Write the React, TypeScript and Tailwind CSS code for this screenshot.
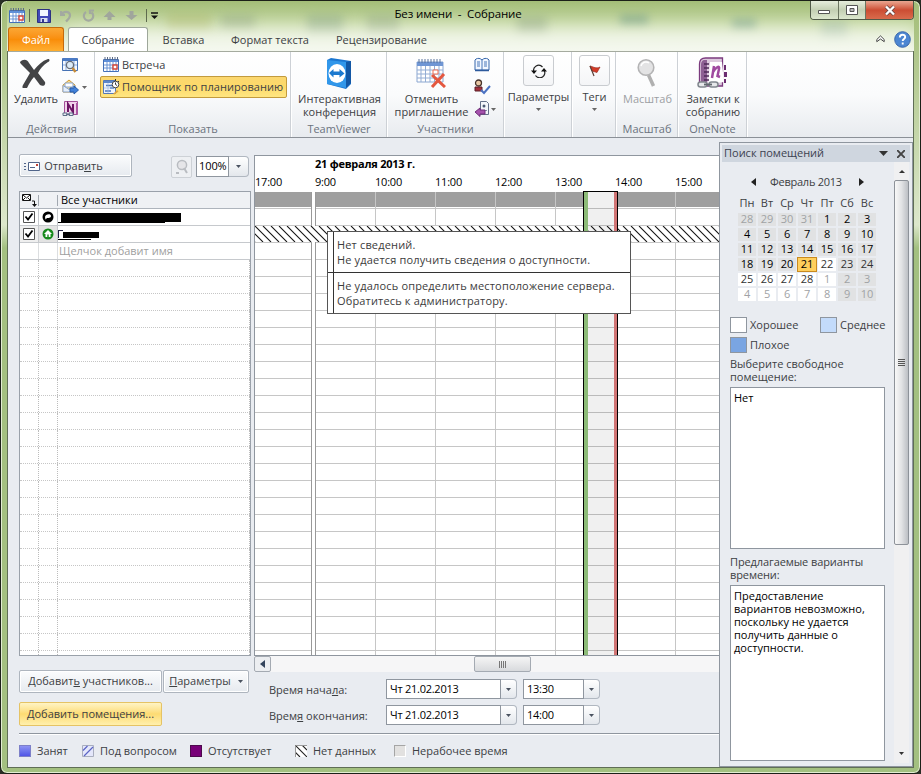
import type { ReactNode } from "react";

const hours = ["10:00", "11:00", "12:00", "13:00", "14:00", "15:00"];

const weekDays = ["Пн", "Вт", "Ср", "Чт", "Пт", "Сб", "Вс"];

const weeks = [
  [28, 29, 30, 31, 1, 2, 3],
  [4, 5, 6, 7, 8, 9, 10],
  [11, 12, 13, 14, 15, 16, 17],
  [18, 19, 20, 21, 22, 23, 24],
  [25, 26, 27, 28, 1, 2, 3],
  [4, 5, 6, 7, 8, 9, 10],
];

const dayClass = (week: number, day: number) => {
  if (week === 3 && day === 3)
    return "bg-[#ffcf5c] text-black outline outline-[#c98a1e]";
  const background =
    (week === 3 && day === 4) || (week > 3 && day < 5)
      ? "bg-white"
      : "bg-[#e1e2e3]";
  if ((week === 0 && day < 4) || (week === 4 && day > 3) || week === 5)
    return `${background} text-[#a0a2a5]`;
  if (week === 4 || (week === 3 && day > 3))
    return `${background} text-[#333]`;
  return `${background} text-black`;
};

const Arrow = ({ className = "text-[#4a5260]" }: { className?: string }) => (
  <svg className={className} width="5" height="3" viewBox="0 0 5 3">
    <path d="M0 0h5L2.5 3z" fill="currentColor" />
  </svg>
);

const CalendarIcon = () => (
  <svg width="17" height="16" viewBox="0 0 17 16">
    <path d="M.5 2.500h15v12h-15z" fill="#fff" stroke="#4470b8" />
    <path d="M1 3h14v2H1z" fill="#5f8fd8" />
    <path d="M2 0v3M4.500 0v3M7 0v3M9.500 0v3M12 0v3M14.500 0v3" stroke="#5b6b86" />
    <path
      d="M1 8h14M1 11h14M4 5v9M7 5v9M10 5v9M13 5v9"
      stroke="#5d8ad0"
      strokeWidth=".9"
    />
    <path d="M10 8h4v4h-4z" fill="#fff" stroke="#d8483a" strokeWidth="1.400" />
  </svg>
);

const AssistantIcon = () => (
  <svg width="17" height="16" viewBox="0 0 17 16">
    <path d="M.5 1.500h12v13H.5z" fill="#eef4fd" stroke="#5579b5" />
    <path d="M1 2h11v2H1z" fill="#5b87cc" />
    <path d="M3 6.500h6M7 9h4M2 12h6" stroke="#4874bd" strokeWidth="1.600" />
    <path d="M1 9h11M5 4v10" stroke="#9fb9e0" strokeWidth=".7" />
    <circle cx="12.500" cy="5.500" r="3.300" fill="#fff" stroke="#444" />
    <path d="M12.500 5.500V3.500M12.500 5.500l1.500 1M12.500 0v2M15 2l1 1" stroke="#333" />
    <path d="M10 15l4-4 1.500 1.500-4 3z" fill="#e2a83c" />
  </svg>
);

const Group = ({
  label,
  className,
  children,
}: {
  label?: string;
  className: string;
  children: ReactNode;
}) => (
  <div
    className={`flex shrink-0 flex-col border-r border-[#cdd1d6] shadow-[1px_0_0_#fff] ${className}`}
  >
    <div className="flex h-[70px]">{children}</div>
    <div className="h-[15px] pl-px text-center text-[#6b737e]">{label}</div>
  </div>
);

const BigButton = ({
  icon,
  lines,
  className = "",
}: {
  icon: ReactNode;
  lines: string[];
  className?: string;
}) => (
  <div className={`flex flex-col items-center pt-[5px] ${className}`}>
    <div className="flex h-8 items-center justify-center">{icon}</div>
    <div className="pt-[3px] pl-[2px] text-center leading-[13px] whitespace-nowrap">
      {lines.map((line) => (
        <div key={line}>{line}</div>
      ))}
    </div>
  </div>
);

const Field = ({ value, className }: { value: string; className: string }) => (
  <div className={`flex h-[20px] ${className}`}>
    <div className="flex-1 border border-[#8f969f] bg-white pl-[3px] leading-[17px] tracking-[-0.250px] text-black">
      {value}
    </div>
    <div className="flex w-4 items-center justify-center rounded-r-sm border border-l-0 border-[#b0b7c0] bg-linear-to-b from-white to-[#e3e7ec]">
      <Arrow />
    </div>
  </div>
);

const button =
  "flex h-[23px] items-center justify-center rounded-[2px] border border-[#aeb5be] bg-linear-to-b from-[#fbfcfd] to-[#e6eaef] shadow-[inset_0_0_0_1px_#fff]";

const QuickAccess = () => (
  <div className="flex h-[26px] items-center pt-[3px] pl-[2px]">
    <CalendarIcon />
    <div className="ml-[3px] h-[13px] w-px bg-[#5e6b4e]" />
    <svg className="ml-[7px]" width="14" height="14" viewBox="0 0 14 14">
      <path d="M.5.5h12l1 1v12H.5z" fill="#4148b8" stroke="#2c3180" />
      <path d="M3 1h8v6H3z" fill="#f2f6ff" />
      <path d="M3.500 9h7v4h-7z" fill="#d8def0" />
      <path d="M5 10h2v3H5z" fill="#343a90" />
    </svg>
    <svg className="ml-[9px]" width="12" height="14" viewBox="0 0 12 14">
      <path
        d="M1 2v4h4M1.500 5.500C4 1.500 10 2 10 6.500 10 9 8 10.500 6 12.500"
        fill="none"
        stroke="#a3a9a0"
        strokeWidth="2.200"
      />
    </svg>
    <svg className="ml-[10px]" width="13" height="14" viewBox="0 0 13 14">
      <path
        d="M4 3a4.700 4.700 0 1 0 5.500.3M8 5V1.500h4"
        fill="none"
        stroke="#a3a9a0"
        strokeWidth="2.200"
      />
    </svg>
    <svg className="ml-[8px]" width="13" height="10" viewBox="0 0 12 10">
      <path d="M6 0l6 6H8v3H4V6H0z" fill="#a0a69c" />
    </svg>
    <svg className="ml-[9px]" width="13" height="10" viewBox="0 0 12 10">
      <path d="M6 9L0 4h4V0h4v4h4z" fill="#a0a69c" />
    </svg>
    <div className="ml-[8px] h-[13px] w-px bg-[#5e6b4e]" />
    <svg className="ml-[4px]" width="7" height="8" viewBox="0 0 7 8">
      <path d="M0 1h7" stroke="#111" strokeWidth="1.500" />
      <path d="M0 3.500h7L3.500 7z" fill="#111" />
    </svg>
  </div>
);

const WindowButtons = () => (
  <div className="absolute top-0 right-0 flex h-[19px] w-[104px] overflow-hidden rounded-b-[4px] border border-t-0 border-[#505a48]">
    <div className="flex w-[28px] items-center justify-center border-r border-[#6b7560] bg-linear-to-b from-[#e6eddc] via-[#c3cfb3] to-[#dce7ce]">
      <svg width="13" height="12" viewBox="0 0 13 12">
        <path d="M.5 6.500h11v3H.5z" fill="#fff" stroke="#555" />
      </svg>
    </div>
    <div className="flex w-[27px] items-center justify-center border-r border-[#6b7560] bg-linear-to-b from-[#e6eddc] via-[#c3cfb3] to-[#dce7ce]">
      <svg width="12" height="10" viewBox="0 0 12 10">
        <path d="M.5.5h11v9H.5z" fill="#fff" stroke="#555" />
        <path d="M4 3.500h4v3H4z" fill="#bbb" stroke="#555" />
      </svg>
    </div>
    <div className="flex flex-1 items-center justify-center bg-linear-to-b from-[#e8a691] via-[#cc4d33] to-[#d96b4c]">
      <svg width="12" height="11" viewBox="0 0 12 11">
        <path d="M2 1.500l8 8M10 1.500l-8 8" stroke="#5a4040" strokeWidth="3.800" />
        <path d="M2 1.500l8 8M10 1.500l-8 8" stroke="#fff" strokeWidth="2.400" />
      </svg>
    </div>
  </div>
);

const TitleBar = () => (
  <header className="relative h-[50px] overflow-hidden bg-linear-to-b from-[#a3bd77] via-[#c9dba9] to-[#edf3e3]">
    <div className="absolute top-[12px] left-[160px] h-[18px] w-[44px] bg-[#aeb96b]/50 blur-[5px]" />
    <div className="absolute top-[14px] left-[214px] h-[14px] w-[34px] bg-[#8fa67d]/50 blur-[5px]" />
    <div className="absolute top-[14px] left-[300px] h-[18px] w-[36px] bg-[#86a280]/50 blur-[5px]" />
    <div className="absolute top-[14px] left-[360px] h-[18px] w-[32px] bg-[#8fa67d]/50 blur-[5px]" />
    <div className="absolute top-[16px] left-[510px] h-[16px] w-[30px] bg-[#8fa67d]/60 blur-[5px]" />
    <div className="absolute top-[14px] left-[613px] h-[10px] w-[28px] bg-[#6f9a80]/60 blur-[4px]" />
    <div className="absolute top-[18px] left-[725px] h-[10px] w-[24px] bg-[#6f9a80]/60 blur-[4px]" />
    <div className="absolute top-[20px] left-[814px] h-[16px] w-[26px] bg-[#8fae95]/50 blur-[5px]" />
    <div className="absolute top-[26px] right-0 left-[60px] h-[30px] bg-white/55 blur-[8px]" />
    <div className="absolute top-[5px] right-0 left-0 pr-[5px] text-center text-[11.500px] leading-[15px] tracking-[-0.130px] whitespace-pre text-black">
      <span>Без имени  -  Собрание</span>
    </div>
    <WindowButtons />
    <div className="relative">
      <QuickAccess />
      <nav className="flex h-[24px] pl-px leading-[26px] text-[#3c4043]">
        <div className="w-[56px] rounded-t-[3px] border border-b-0 border-[#c56a0c] bg-linear-to-b from-[#fba733] via-[#f98d08] to-[#ffae2e] text-center leading-[24px] text-white">
          Файл
        </div>
        <div className="ml-1 w-[80px] rounded-t-[3px] border border-b-0 border-[#9ea79a] bg-white text-center leading-[24px]">
          Собрание
        </div>
        <div className="w-[71px] text-center">Вставка</div>
        <div className="w-[102px] text-center">Формат текста</div>
        <div className="w-[121px] text-center">Рецензирование</div>
        <div className="ml-auto flex items-center gap-[9px] pr-[3px]">
          <svg width="9" height="8" viewBox="0 0 9 8">
            <path
              d="M.8 4.500L4.500.9l3.700 3.600v2.200L4.500 4 .8 6.700z"
              fill="#fff"
              stroke="#444"
            />
          </svg>
          <svg width="17" height="17" viewBox="0 0 17 17">
            <circle cx="8.500" cy="8.500" r="7.800" fill="#4c86d2" stroke="#3a67aa" />
            <path
              d="M5.800 6.500c0-3.800 5.600-3.500 5.400-.4C11.100 8 8.700 8 8.700 10M8.700 11.500v2"
              fill="none"
              stroke="#fff"
              strokeWidth="1.900"
            />
          </svg>
        </div>
      </nav>
    </div>
  </header>
);

const Ribbon = () => (
  <section className="flex h-[87px] border-t border-b border-[#8b9097] border-t-[#a5ab9f] bg-linear-to-b from-white via-[#fafbfc] to-[#e8ebef] leading-[14px]">
    <Group label="Действия" className="w-[87px]">
      <BigButton
        className="w-[54px]"
        lines={["Удалить"]}
        icon={
          <svg width="30" height="29" viewBox="0 0 30 29">
            <path
              d="M0 3c3-3 7-3 9 1l5 7c4-5 8-9 14-11 2 0 2 2 0 3-5 3-8 7-10 11l7 9c1 3-2 5-5 3l-6-8c-3 3-5 7-7 11-2 2-6 1-4-3l7-12-8-8C1 5 0 4 0 3z"
              fill="#434446"
            />
          </svg>
        }
      />
      <div className="flex flex-col gap-[6px] pt-[5px]">
        <svg width="17" height="16" viewBox="0 0 17 16">
          <path d="M.5 1.500h15v12h-15z" fill="#f4f8fe" stroke="#4672b4" />
          <path d="M1 1h14v3H1z" fill="#4a7ac4" />
          <path d="M4 4v9M12 4v9M1 8h14" stroke="#8badde" />
          <circle cx="8" cy="8" r="3.600" fill="#dcebf8" stroke="#666d78" strokeWidth="1.300" />
          <path d="M10.500 11l3 4" stroke="#c68b38" strokeWidth="2.500" />
        </svg>
        <div className="flex items-center gap-[3px]">
          <svg width="17" height="16" viewBox="0 0 17 16">
            <path d="M1 6l6-5 6 5v7H1z" fill="#f9dc8e" stroke="#d39d36" />
            <path d="M3 4h8v4H3z" fill="#fff" stroke="#89a5ce" />
            <path d="M1 6.500l6 4 6-4V13H1z" fill="#e6effa" stroke="#8ba5cc" />
            <path d="M8 9h4V7l4.500 4-4.500 4v-2H8z" fill="#4180d8" stroke="#265ba8" />
          </svg>
          <Arrow className="text-[#666]" />
        </div>
        <svg width="17" height="16" viewBox="0 0 17 16">
          <path d="M2.500.5h13v13h-13z" fill="#f0d3ea" stroke="#a34f98" />
          <path d="M6 11V3l5 8V3" fill="none" stroke="#6d1565" strokeWidth="2" />
          <path d="M14 2h2v11h-2z" fill="#ad57a2" />
          <path
            d="M1 12h4v2.500H1zM7 12h4v2.500H7zM4 13.300h4"
            fill="#e9eef3"
            stroke="#5d6f88"
          />
        </svg>
      </div>
    </Group>
    <Group label="Показать" className="w-[196px]">
      <div className="pt-[3px] pl-[5px]">
        <div className="flex h-[19px] items-center gap-[2px] pl-[3px]">
          <CalendarIcon />
          <span>Встреча</span>
        </div>
        <div className="mt-[2px] flex h-[22px] w-[187px] items-center gap-[2px] rounded-[2px] border border-[#c29b3d] bg-linear-to-b from-[#fbd76f] via-[#fdda69] to-[#ffe682] pl-[2px] whitespace-nowrap">
          <AssistantIcon />
          <span className="tracking-[0.050px]">Помощник по планированию</span>
        </div>
      </div>
    </Group>
    <Group label="TeamViewer" className="w-[96px]">
      <BigButton
        className="w-full"
        lines={["Интерактивная", "конференция"]}
        icon={
          <svg width="26" height="31" viewBox="0 0 26 31">
            <path d="M1 2l4-2 20 3v23l-5 5-19-5z" fill="#1b76d0" />
            <path d="M1 2l19 2v26L1 26z" fill="#3197ea" />
            <path d="M20 4l5-1v22l-5 5z" fill="#1257a5" />
            <ellipse cx="11" cy="15.500" rx="8.500" ry="9.500" fill="#fff" />
            <path d="M3 15l4.500-4v2.500h6V11l5 4.500-5 4V17h-6v2.500z" fill="#1b79cf" />
          </svg>
        }
      />
    </Group>
    <Group label="Участники" className="w-[117px]">
      <BigButton
        className="w-[87px]"
        lines={["Отменить", "приглашение"]}
        icon={
          <svg width="30" height="29" viewBox="0 0 30 29">
            <path d="M1 3h26v20H1z" fill="#fff" stroke="#8aa6d0" />
            <path d="M1 3h26v4H1z" fill="#6f96d4" />
            <path
              d="M3 0v4M6 0v4M9 0v4M12 0v4M15 0v4M18 0v4M21 0v4M24 0v4"
              stroke="#59729c"
            />
            <path
              d="M1 11h26M1 15h26M1 19h26M5 7v16M9.500 7v16M14 7v16M18.500 7v16M23 7v16"
              stroke="#93add4"
            />
            <path d="M17 11h5v4h-5z" fill="#fff" stroke="#ed6f55" />
            <path d="M16 16l13 12M28 15L16 28" stroke="#e4573f" strokeWidth="3" />
          </svg>
        }
      />
      <div className="flex flex-col gap-[6px] pt-[5px]">
        <svg width="16" height="16" viewBox="0 0 16 16">
          <path d="M1 3l1-1c2-1 4-1 6 1 2-2 4-2 6-1l1 1v10H1z" fill="#f2f7ff" stroke="#3767ab" />
          <path d="M8 3v10M3 5h3M3 7h3M3 9h3M10 5h3M10 7h3M10 9h3" stroke="#4876b8" />
          <path d="M1 13.500h14" stroke="#2d5a9c" strokeWidth="1.500" />
        </svg>
        <svg width="17" height="16" viewBox="0 0 17 16">
          <circle cx="4.500" cy="4" r="3" fill="#e9c8a5" stroke="#47332b" strokeWidth="1.300" />
          <path d="M1 12V8h7v4z" fill="#a4303c" stroke="#5b2129" />
          <path d="M7 11l3 3 6-7" fill="none" stroke="#4b72c2" strokeWidth="2" />
        </svg>
        <div className="flex items-center gap-px">
          <svg width="16" height="16" viewBox="0 0 16 16">
            <path d="M6.500.5h6l2 2v11h-8z" fill="#f3f6fa" stroke="#637089" />
            <circle cx="10" cy="5" r="1.500" fill="#4b5b73" />
            <path d="M8 9.500h5" stroke="#8190a8" />
            <path d="M1 11l5-4v2h5v4H6v2.500z" fill="#a552ad" stroke="#6f2c78" />
          </svg>
          <Arrow className="text-[#666]" />
        </div>
      </div>
    </Group>
    <Group className="w-[68px]">
      <div className="flex w-full flex-col items-center pt-[3px] pl-[2px]">
        <div className="flex h-[31px] w-[31px] items-center justify-center rounded-[3px] border border-[#c9ccd0] bg-linear-to-b from-white to-[#f4f5f7]">
          <svg width="16" height="14" viewBox="0 0 16 14">
            <path
              d="M3 8a5 5 0 0 1 8.500-5M13 6a5 5 0 0 1-8.500 5.500"
              fill="none"
              stroke="#222"
              strokeWidth="1.200"
            />
            <path d="M0 6.500h6l-3 3.500zM10 7.500h6L13 4z" fill="#111" />
          </svg>
        </div>
        <div className="pt-[4px]">Параметры</div>
        <Arrow className="mt-[4px] text-[#666]" />
      </div>
    </Group>
    <Group className="w-[44px]">
      <div className="flex w-full flex-col items-center pt-[3px] pl-[2px]">
        <div className="flex h-[31px] w-[31px] items-center justify-center rounded-[3px] border border-[#c9ccd0] bg-linear-to-b from-white to-[#f4f5f7]">
          <svg width="12" height="12" viewBox="0 0 12 12">
            <path d="M1 1c4 1 6 3 10 1L8 7.500 3 6z" fill="#d43b28" stroke="#9c2c1e" strokeWidth=".7" />
            <path d="M1 1l4 10" stroke="#5c4037" strokeWidth="1.200" />
          </svg>
        </div>
        <div className="pt-[4px]">Теги</div>
        <Arrow className="mt-[4px] text-[#666]" />
      </div>
    </Group>
    <Group label="Масштаб" className="w-[62px]">
      <BigButton
        className="w-full text-[#9c9fa3]"
        lines={["Масштаб"]}
        icon={
          <svg width="20" height="30" viewBox="0 0 20 30">
            <path d="M11.500 17l5 11" stroke="#b0b0b0" strokeWidth="3.500" />
            <circle cx="9" cy="9.500" r="7.800" fill="#e3e3e4" stroke="#b4b4b5" strokeWidth="1.600" />
            <path d="M4 8a5 5 0 0 1 8-3" fill="none" stroke="#fff" strokeWidth="1.500" />
          </svg>
        }
      />
    </Group>
    <Group label="OneNote" className="w-[69px]">
      <BigButton
        className="w-full"
        lines={["Заметки к", "собранию"]}
        icon={
          <svg width="32" height="32" viewBox="0 0 32 32">
            <path
              d="M3.500 26V7c0-4 2-6 6-6h17v28h-23z"
              fill="#dcc9dd"
              stroke="#7b3b7e"
              strokeWidth="1.300"
            />
            <path d="M5 8c0-3 1-5 4-5h2v24H5z" fill="#8d5f93" />
            <path d="M14 5h12l2 20-16 2z" fill="#fff" />
            <path
              d="M8 7h5M8 11h5M8 15h5M8 19h5M8 23h5"
              stroke="#4e2a58"
              strokeWidth="1.500"
            />
            <path
              d="M18 9l-2 12M17 15c3-5 7-7 6-3l-1.500 7 2.500 1"
              fill="none"
              stroke="#a04aa0"
              strokeWidth="2.500"
            />
            <path d="M28 8h2v5h-2zM28 15h3v5h-3zM28 22h2v4h-2z" fill="#6c2e71" />
            <rect x="2" y="25" width="9" height="5" rx="2.500" fill="#e6e8ea" stroke="#81878e" strokeWidth="1.500" />
            <rect x="13" y="25" width="9" height="5" rx="2.500" fill="#e6e8ea" stroke="#81878e" strokeWidth="1.500" />
            <path d="M8 27.500h8" stroke="#62686f" strokeWidth="1.800" />
          </svg>
        }
      />
    </Group>
  </section>
);

const CheckBox = () => (
  <svg width="12" height="12" viewBox="0 0 12 12">
    <path d="M.5.5h11v11H.5z" fill="#fff" stroke="#555" />
    <path d="M2.500 5.500l2.500 3 4.500-6" fill="none" stroke="#000" strokeWidth="1.800" />
  </svg>
);

const Attendees = () => (
  <div className="mt-[12px] h-[465px] w-[232px] overflow-hidden border border-[#9aa1aa] bg-white">
    <div className="flex h-[17px] items-center border-b border-[#aeb4bc] bg-[#eff1f4] text-black">
      <svg className="ml-[2px]" width="15" height="15" viewBox="0 0 15 15">
        <path d="M.5 1.500h8v6h-8z" fill="#fff" stroke="#111" />
        <path d="M1 2l3.500 3L8 2M1 7l2-2M8 7L6 5" fill="none" stroke="#111" />
        <path d="M10 8h2.500v5" fill="none" stroke="#111" />
        <path d="M10 11h5l-2.500 3z" fill="#111" />
      </svg>
      <div className="ml-px h-[11px] w-px bg-[#a2a8b0]" />
      <div className="ml-[18px] h-[11px] w-px bg-[#a2a8b0]" />
      <span className="ml-[3px]">Все участники</span>
    </div>
    <div className="flex h-[17px] border-b border-[#c6c9cd]">
      <div className="flex w-[19px] items-center justify-center border-r border-[#c6c9cd]">
        <CheckBox />
      </div>
      <div className="flex w-[19px] items-center justify-center border-r border-[#c6c9cd]">
        <svg width="12" height="12" viewBox="0 0 12 12">
          <circle cx="6" cy="6" r="5.500" fill="#000" />
          <path d="M3 6c0-3 6-4 6-1 0 2-3 2-4 2L3.500 8.500z" fill="#fff" />
        </svg>
      </div>
      <div className="flex-1 pt-[4px] pl-[3px]">
        <div className="h-[9px] w-[120px] bg-black" />
        <div className="-ml-[3px] h-px w-[107px] bg-black" />
      </div>
    </div>
    <div className="flex h-[17px] border-b border-[#c6c9cd]">
      <div className="flex w-[19px] items-center justify-center border-r border-[#c6c9cd] bg-[#efefef]">
        <CheckBox />
      </div>
      <div className="flex w-[19px] items-center justify-center border-r border-[#c6c9cd] bg-[#e3e3e3]">
        <svg width="12" height="12" viewBox="0 0 12 12">
          <circle cx="6" cy="6" r="5.500" fill="#178a1c" />
          <path d="M6 2l4 4H8.500v3h-5V6H2z" fill="#fff" />
          <path d="M5.300 6.500h1.400V9H5.300z" fill="#178a1c" />
        </svg>
      </div>
      <div className="flex-1 pt-[4px]">
        <div className="flex">
          <div className="h-[8px] w-[5px] border-t border-l border-[#224]" />
          <div className="mt-[2px] h-[6px] w-[36px] bg-black" />
        </div>
        <div className="mt-px h-px w-[33px] bg-black" />
      </div>
    </div>
    <div className="flex h-[17px] border-b border-[#c6c9cd] leading-[16px] text-[#a0a0a0]">
      <div className="w-[19px] border-r border-[#dcdee0]" />
      <div className="w-[19px] border-r border-[#dcdee0]" />
      <span className="pl-px">Щелчок добавит имя</span>
    </div>
    {Array.from({ length: 24 }, (_, i) => (
      <div
        key={i}
        className="flex h-[17px] border-b border-dotted border-[#c6c6c6]"
      >
        <div className="w-[19px] border-r border-dotted border-[#bcbcbc]" />
        <div className="w-[19px] border-r border-dotted border-[#bcbcbc]" />
        <div className="w-[192px] border-r border-dotted border-[#bcbcbc]" />
      </div>
    ))}
  </div>
);

const Timeline = () => (
  <div className="relative h-[501px] w-[465px] overflow-hidden border-t border-b border-l border-[#8f969f] bg-white text-black">
    <div className="pl-[60px] text-[11px] leading-[15px] font-bold tracking-[-0.250px]">
      21 февраля 2013 г.
    </div>
    <div className="flex h-[22px] pt-[3px] leading-[15px] tracking-[-0.200px]">
      <div className="w-[60px] shrink-0">17:00</div>
      <div className="w-[60px] shrink-0">9:00</div>
      {hours.map((hour) => (
        <div key={hour} className="w-[60px] shrink-0">
          {hour}
        </div>
      ))}
    </div>
    <div className="-mt-px h-[15px] bg-[#9f9f9f]" />
    <div className="h-[2px] border-b border-[#c6c6c6]" />
    {Array.from({ length: 27 }, (_, i) => (
      <div key={i} className="h-[17px] border-b border-[#c6c6c6]" />
    ))}
    {/* hour lines and the gap between two working days */}
    <div className="absolute top-[36px] bottom-0 left-[56px] w-[5px] border-r border-l border-[#999] bg-white" />
    <div className="absolute top-[36px] bottom-0 left-[120px] flex">
      {hours.map((hour) => (
        <div key={hour} className="w-[60px] border-l border-[#c6c6c6]" />
      ))}
    </div>
    <svg className="absolute top-[70px] left-0" width="465" height="16">
      <defs>
        <pattern id="no-data" width="8" height="16" patternUnits="userSpaceOnUse">
          <path
            d="M-16 0L0 16M-8 0L8 16M0 0l16 16M8 0l16 16"
            stroke="#111"
            strokeWidth="1.100"
          />
        </pattern>
      </defs>
      <rect width="465" height="16" fill="#fff" />
      <rect width="465" height="16" fill="url(#no-data)" />
    </svg>
    {/* selected meeting time */}
    <div className="absolute top-[35px] bottom-0 left-[328px] flex w-[35px] border border-b-0 border-black">
      <div className="w-[4px] bg-[#8dbb78]" />
      <div className="flex-1 bg-black/6">
        <div className="h-[15px] bg-[#f0f0f0]" />
      </div>
      <div className="w-[3px] bg-[#d07474]" />
    </div>
    <div className="absolute top-[75px] left-[72px] flex h-[83px] w-[304px] border border-[#555] bg-white tracking-[0.160px] text-[#3c3c3c]">
      <div className="w-[6px] border-r border-[#333]" />
      <div className="flex-1 leading-[15px] whitespace-nowrap">
        <div className="-ml-[6px] h-[41px] border-b border-[#333] pt-[5px] pl-[9px]">
          Нет сведений.
          <br />
          Не удается получить сведения о доступности.
        </div>
        <div className="pt-[5px] pl-[3px]">
          Не удалось определить местоположение сервера.
          <br />
          Обратитесь к администратору.
        </div>
      </div>
    </div>
  </div>
);

const Legend = () => (
  <div className="flex h-[33px] items-center pl-[11px] leading-[15px]">
    <div className="h-[12px] w-[12px] border border-[#7d80c8] bg-linear-to-b from-[#8e92f2] to-[#5054e6]" />
    <span className="ml-[6px] w-[45px]">Занят</span>
    <svg width="12" height="12" viewBox="0 0 12 12">
      <path d="M.5.5h11v11H.5z" fill="#e4e7fb" stroke="#a9aebf" />
      <path d="M1 5.500L5.500 1M2 11l9-9" stroke="#5a64c4" strokeWidth="1.200" />
    </svg>
    <span className="ml-[6px] w-[90px]">Под вопросом</span>
    <div className="h-[12px] w-[12px] border border-[#4d0a4d] bg-[#780078]" />
    <span className="ml-[6px] w-[87px]">Отсутствует</span>
    <svg width="12" height="12" viewBox="0 0 12 12">
      <path d="M0 0h12v12H0z" fill="#fff" />
      <path d="M0 0l12 12M7 0l5 5M0 7l5 5" stroke="#222" strokeWidth="1.100" />
      <path d="M.5 12V.5H12" fill="none" stroke="#999" />
    </svg>
    <span className="ml-[6px] w-[81px]">Нет данных</span>
    <div className="h-[12px] w-[12px] border border-[#a5a5a5] border-r-white border-b-white bg-[#e2e1e0]" />
    <span className="ml-[6px]">Нерабочее время</span>
  </div>
);

const RoomFinder = () => (
  <aside className="mt-[4px] flex w-[194px] flex-col border border-[#8f969f] bg-[#e9ecf1] pt-[2px]">
    <div className="mx-[2px] flex h-[17px] items-center bg-[#cfd6df] px-[2px] text-[#3c4250]">
      <span>Поиск помещений</span>
      <svg className="ml-auto" width="9" height="5" viewBox="0 0 9 5">
        <path d="M0 0h9L4.500 5z" fill="#333" />
      </svg>
      <svg className="mr-[3px] ml-[9px]" width="8" height="8" viewBox="0 0 8 8">
        <path d="M0 0l8 8M8 0L0 8" stroke="#444" strokeWidth="1.900" />
      </svg>
    </div>
    <div className="flex flex-1">
      <div className="w-[174px] pl-[10px]">
        <div className="mt-[12px] flex h-[16px] items-center pl-[21px]">
          <svg width="5" height="8" viewBox="0 0 5 8">
            <path d="M5 0v8L0 4z" fill="#222" />
          </svg>
          <span className="mx-[14px] w-[75px] tracking-[-0.250px] whitespace-nowrap">
            Февраль 2013
          </span>
          <svg width="5" height="8" viewBox="0 0 5 8">
            <path d="M0 0v8l5-4z" fill="#222" />
          </svg>
        </div>
        <div className="mt-[5px] ml-[7px] grid w-[140px] grid-cols-7 text-center leading-[16px]">
          {weekDays.map((day) => (
            <div key={day}>{day}</div>
          ))}
        </div>
        <div className="mt-[2px] ml-[8px] grid w-[138px] grid-cols-7 gap-x-[2px] gap-y-[2px] text-center leading-[12px] tracking-[-0.100px]">
          {weeks.map((week, w) =>
            week.map((day, d) => (
              <div key={`${w}-${d}`} className={`h-[13px] ${dayClass(w, d)}`}>
                {day}
              </div>
            )),
          )}
        </div>
        <div className="mt-[16px] flex items-center leading-[16px]">
          <div className="h-4 w-[17px] border border-[#8f969f] bg-white" />
          <span className="ml-[3px] w-[70px]">Хорошее</span>
          <div className="h-4 w-[17px] border border-[#8f969f] bg-[#c3dbfb]" />
          <span className="ml-[3px]">Среднее</span>
        </div>
        <div className="mt-[4px] flex items-center leading-[16px]">
          <div className="h-4 w-[17px] border border-[#8f969f] bg-[#7aa5e2]" />
          <span className="ml-[3px]">Плохое</span>
        </div>
        <div className="mt-[4px] leading-[13px]">
          Выберите свободное
          <br />
          помещение:
        </div>
        <div className="mt-[4px] h-[162px] w-[155px] border border-[#8f969f] bg-white pt-[3px] pl-[3px] leading-[13px] text-black">
          Нет
        </div>
        <div className="mt-[6px] leading-[13px] tracking-[-0.100px]">
          Предлагаемые варианты
          <br />
          времени:
        </div>
        <div className="mt-[4px] h-[176px] w-[155px] border border-[#8f969f] bg-white pt-[3px] pl-[3px] leading-[13px] whitespace-nowrap text-black">
          Предоставление
          <br />
          вариантов невозможно,
          <br />
          поскольку не удается
          <br />
          получить данные о<br />
          доступности.
        </div>
      </div>
      <div className="mb-[3px] flex w-[15px] flex-col items-center bg-[#f0f0f1]">
        <svg className="mt-[8px] mb-[7px] shrink-0" width="6" height="3" viewBox="0 0 6 3">
          <path d="M0 3h6L3 0z" fill="#333" />
        </svg>
        <div className="flex h-[365px] w-[15px] flex-col items-center justify-center gap-px rounded-[2px] border border-[#8d9299] bg-linear-to-r from-[#f8f8f8] via-[#e2e3e5] to-[#bcbfc4]">
          <div className="h-px w-[7px] bg-[#555]" />
          <div className="h-px w-[7px] bg-[#555]" />
          <div className="h-px w-[7px] bg-[#555]" />
          <div className="h-px w-[7px] bg-[#555]" />
        </div>
        <Arrow className="mt-auto mb-[8px] text-[#333]" />
      </div>
    </div>
  </aside>
);

const App = () => {
  return (
    <div className="h-[774px] w-[921px] bg-[#2a2e26] font-['Open_Sans','Noto_Sans',sans-serif] text-[11px] text-[#3c4043]">
      <div className="h-[774px] w-[921px] rounded-[7px] border border-[#1c2018] bg-linear-to-b from-[#a3bd77] from-0% via-[#dce7cb] via-29% to-[#a3c080] to-32% px-[6px] pb-[6px] shadow-[inset_0_0_0_1px_#e2edd2]">
        <TitleBar />
        <main className="h-[717px] border border-t-0 border-[#5f6e56] bg-[#e9ecf1]">
          <Ribbon />
          <div className="flex h-[629px]">
            <div className="w-[711px] shrink-0">
              <div className="flex h-[595px]">
                <div className="w-[246px] shrink-0 pt-[16px] pl-[11px]">
                  <div className="flex h-[25px]">
                    <div className={`${button} w-[113px] gap-[3px] pt-px pr-[24px]`}>
                      <svg width="17" height="11" viewBox="0 0 17 11">
                        <path d="M4.500 1.500h11v8h-11z" fill="#fff" stroke="#51658a" />
                        <path d="M12 3h2v2h-2z" fill="#c14436" />
                        <path d="M6 6.500h5M0 2.500h2M0 5.500h2M0 8.500h2" stroke="#51658a" />
                      </svg>
                      <span>
                        Отправ<u>и</u>ть
                      </span>
                    </div>
                    <div className="mt-[2px] ml-[39px] flex h-[22px] w-[21px] items-center justify-center rounded-[2px] border border-[#cdd1d6] bg-[#eef0f3]">
                      <svg width="14" height="16" viewBox="0 0 14 16">
                        <circle cx="7" cy="6" r="4.600" fill="#e5e5e8" stroke="#b9bcc1" strokeWidth="1.500" />
                        <path d="M9 9l3 5M1 14h3" stroke="#b9bcc1" strokeWidth="2" />
                      </svg>
                    </div>
                    <div className="mt-[2px] ml-[4px] flex h-[21px] w-[53px]">
                      <div className="w-[33px] border border-[#8f969f] bg-white pl-[2px] leading-[18px] tracking-[-0.100px] text-black">
                        100%
                      </div>
                      <div className="flex flex-1 items-center justify-center rounded-r-sm border border-l-0 border-[#b0b7c0] bg-linear-to-b from-white to-[#e3e7ec]">
                        <Arrow />
                      </div>
                    </div>
                  </div>
                  <Attendees />
                  <div className="mt-[14px] flex gap-[1px]">
                    <div className={`${button} w-[143px]`}>
                      <span>
                        Добавит<u>ь</u> участников...
                      </span>
                    </div>
                    <div className={`${button} w-[86px] gap-[7px]`}>
                      <span>
                        <u>П</u>араметры
                      </span>
                      <Arrow />
                    </div>
                  </div>
                  <div className="mt-[9px] flex h-[24px] w-[143px] items-center justify-center rounded-[2px] border border-[#e5c365] bg-linear-to-b from-[#fff4c4] via-[#fddb72] to-[#fff0ad]">
                    <span>
                      <u>Д</u>обавить помещения...
                    </span>
                  </div>
                </div>
                <div className="w-[465px] pt-[17px]">
                  <Timeline />
                  <div className="flex h-[16px] bg-[#f6f6f7]">
                    <div className="flex w-[17px] items-center justify-center rounded-[2px] border border-[#a4aab2] bg-[#eceef1]">
                      <svg width="5" height="8" viewBox="0 0 5 8">
                        <path d="M5 0v8L0 4z" fill="#34445c" />
                      </svg>
                    </div>
                    <div className="ml-[203px] flex w-[57px] items-center justify-center gap-px rounded-[2px] border border-[#a4aab2] bg-linear-to-b from-[#f5f5f5] to-[#d8dadd]">
                      <div className="h-[7px] w-px bg-[#777]" />
                      <div className="h-[7px] w-px bg-[#777]" />
                      <div className="h-[7px] w-px bg-[#777]" />
                      <div className="h-[7px] w-px bg-[#777]" />
                    </div>
                  </div>
                  <div className="flex items-center pt-[7px] pl-[15px]">
                    <span className="w-[117px] pt-[2px]">
                      Время нача<u>л</u>а:
                    </span>
                    <Field value="Чт 21.02.2013" className="w-[131px]" />
                    <Field value="13:30" className="ml-[6px] w-[77px]" />
                  </div>
                  <div className="flex items-center pt-[6px] pl-[15px]">
                    <span className="w-[117px] pt-[2px]">
                      Врем<u>я</u> окончания:
                    </span>
                    <Field value="Чт 21.02.2013" className="w-[131px]" />
                    <Field value="14:00" className="ml-[6px] w-[77px]" />
                  </div>
                </div>
              </div>
              <div className="ml-[11px] h-px bg-[#8f969f] shadow-[0_1px_0_#fff]" />
              <Legend />
            </div>
            <RoomFinder />
          </div>
        </main>
      </div>
    </div>
  );
};

export default App;
